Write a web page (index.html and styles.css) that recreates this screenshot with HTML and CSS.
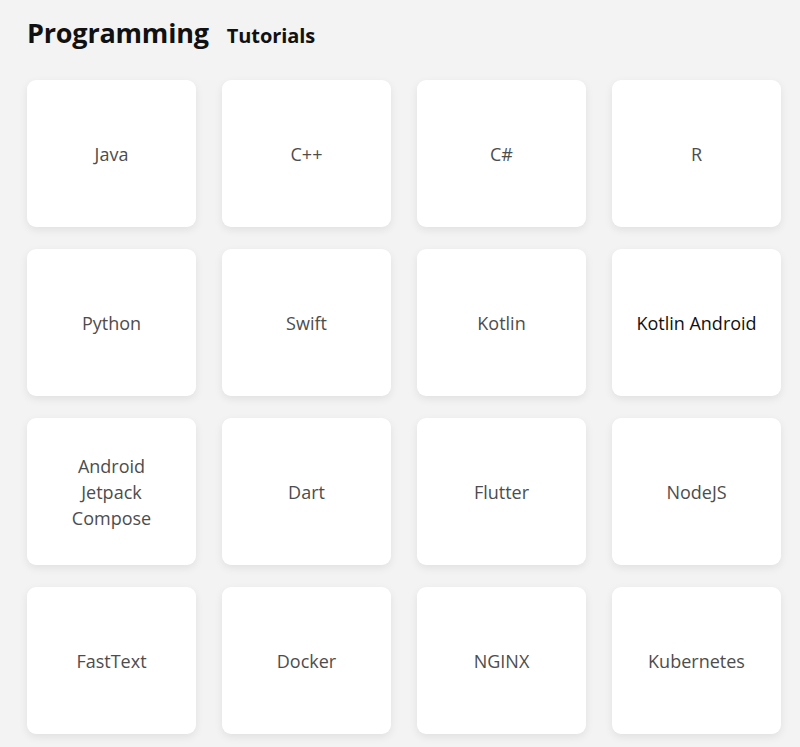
FILE: index.html
```html
<!DOCTYPE html>
<html lang="en">
<head>
    <meta charset="UTF-8">
    <meta name="viewport" content="width=device-width, initial-scale=1.0">
    <title>Programming Tutorials</title>
    <link rel="stylesheet" href="styles.css">
</head>
<body>
    <div class="header">
        <h1>Programming</h1>
        <h2>Tutorials</h2>
    </div>
    <div class="grid">
        <a class="card" href="#">Java</a>
        <a class="card" href="#">C++</a>
        <a class="card" href="#">C#</a>
        <a class="card" href="#">R</a>
        <a class="card" href="#">Python</a>
        <a class="card" href="#">Swift</a>
        <a class="card" href="#">Kotlin</a>
        <a class="card dark" href="#">Kotlin Android</a>
        <a class="card" href="#">Android<br>Jetpack<br>Compose</a>
        <a class="card" href="#">Dart</a>
        <a class="card" href="#">Flutter</a>
        <a class="card" href="#">NodeJS</a>
        <a class="card" href="#">FastText</a>
        <a class="card" href="#">Docker</a>
        <a class="card" href="#">NGINX</a>
        <a class="card" href="#">Kubernetes</a>
    </div>
</body>
</html>
```

FILE: styles.css
```css
body {
    margin: 0;
    padding: 0 19px 20px 27px;
    font-family: 'Open Sans', 'Noto Sans', sans-serif;
    background-color: #f3f3f3;
    color: #111;
}
.header {
    display: flex;
    align-items: baseline;
    gap: 18px;
    height: 80px;
    padding-top: 15px;
    box-sizing: border-box;
}
.header h1 {
    margin: 0;
    font-size: 27px;
    font-weight: 700;
    letter-spacing: -0.2px;
    line-height: 36px;
}
.header h2 {
    margin: 0;
    font-size: 20px;
    font-weight: 700;
    letter-spacing: -0.1px;
}
.grid {
    display: grid;
    grid-template-columns: repeat(4, 169px);
    grid-auto-rows: 147px;
    column-gap: 26px;
    row-gap: 22px;
}
.card {
    display: flex;
    align-items: center;
    justify-content: center;
    text-align: center;
    background-color: white;
    border-radius: 9px;
    box-shadow: 0 3px 8px rgba(0, 0, 0, 0.08);
    color: #4d4d4d;
    font-size: 18px;
    font-weight: 500;
    line-height: 26px;
    text-decoration: none;
}
.card.dark {
    color: #111;
}
```
